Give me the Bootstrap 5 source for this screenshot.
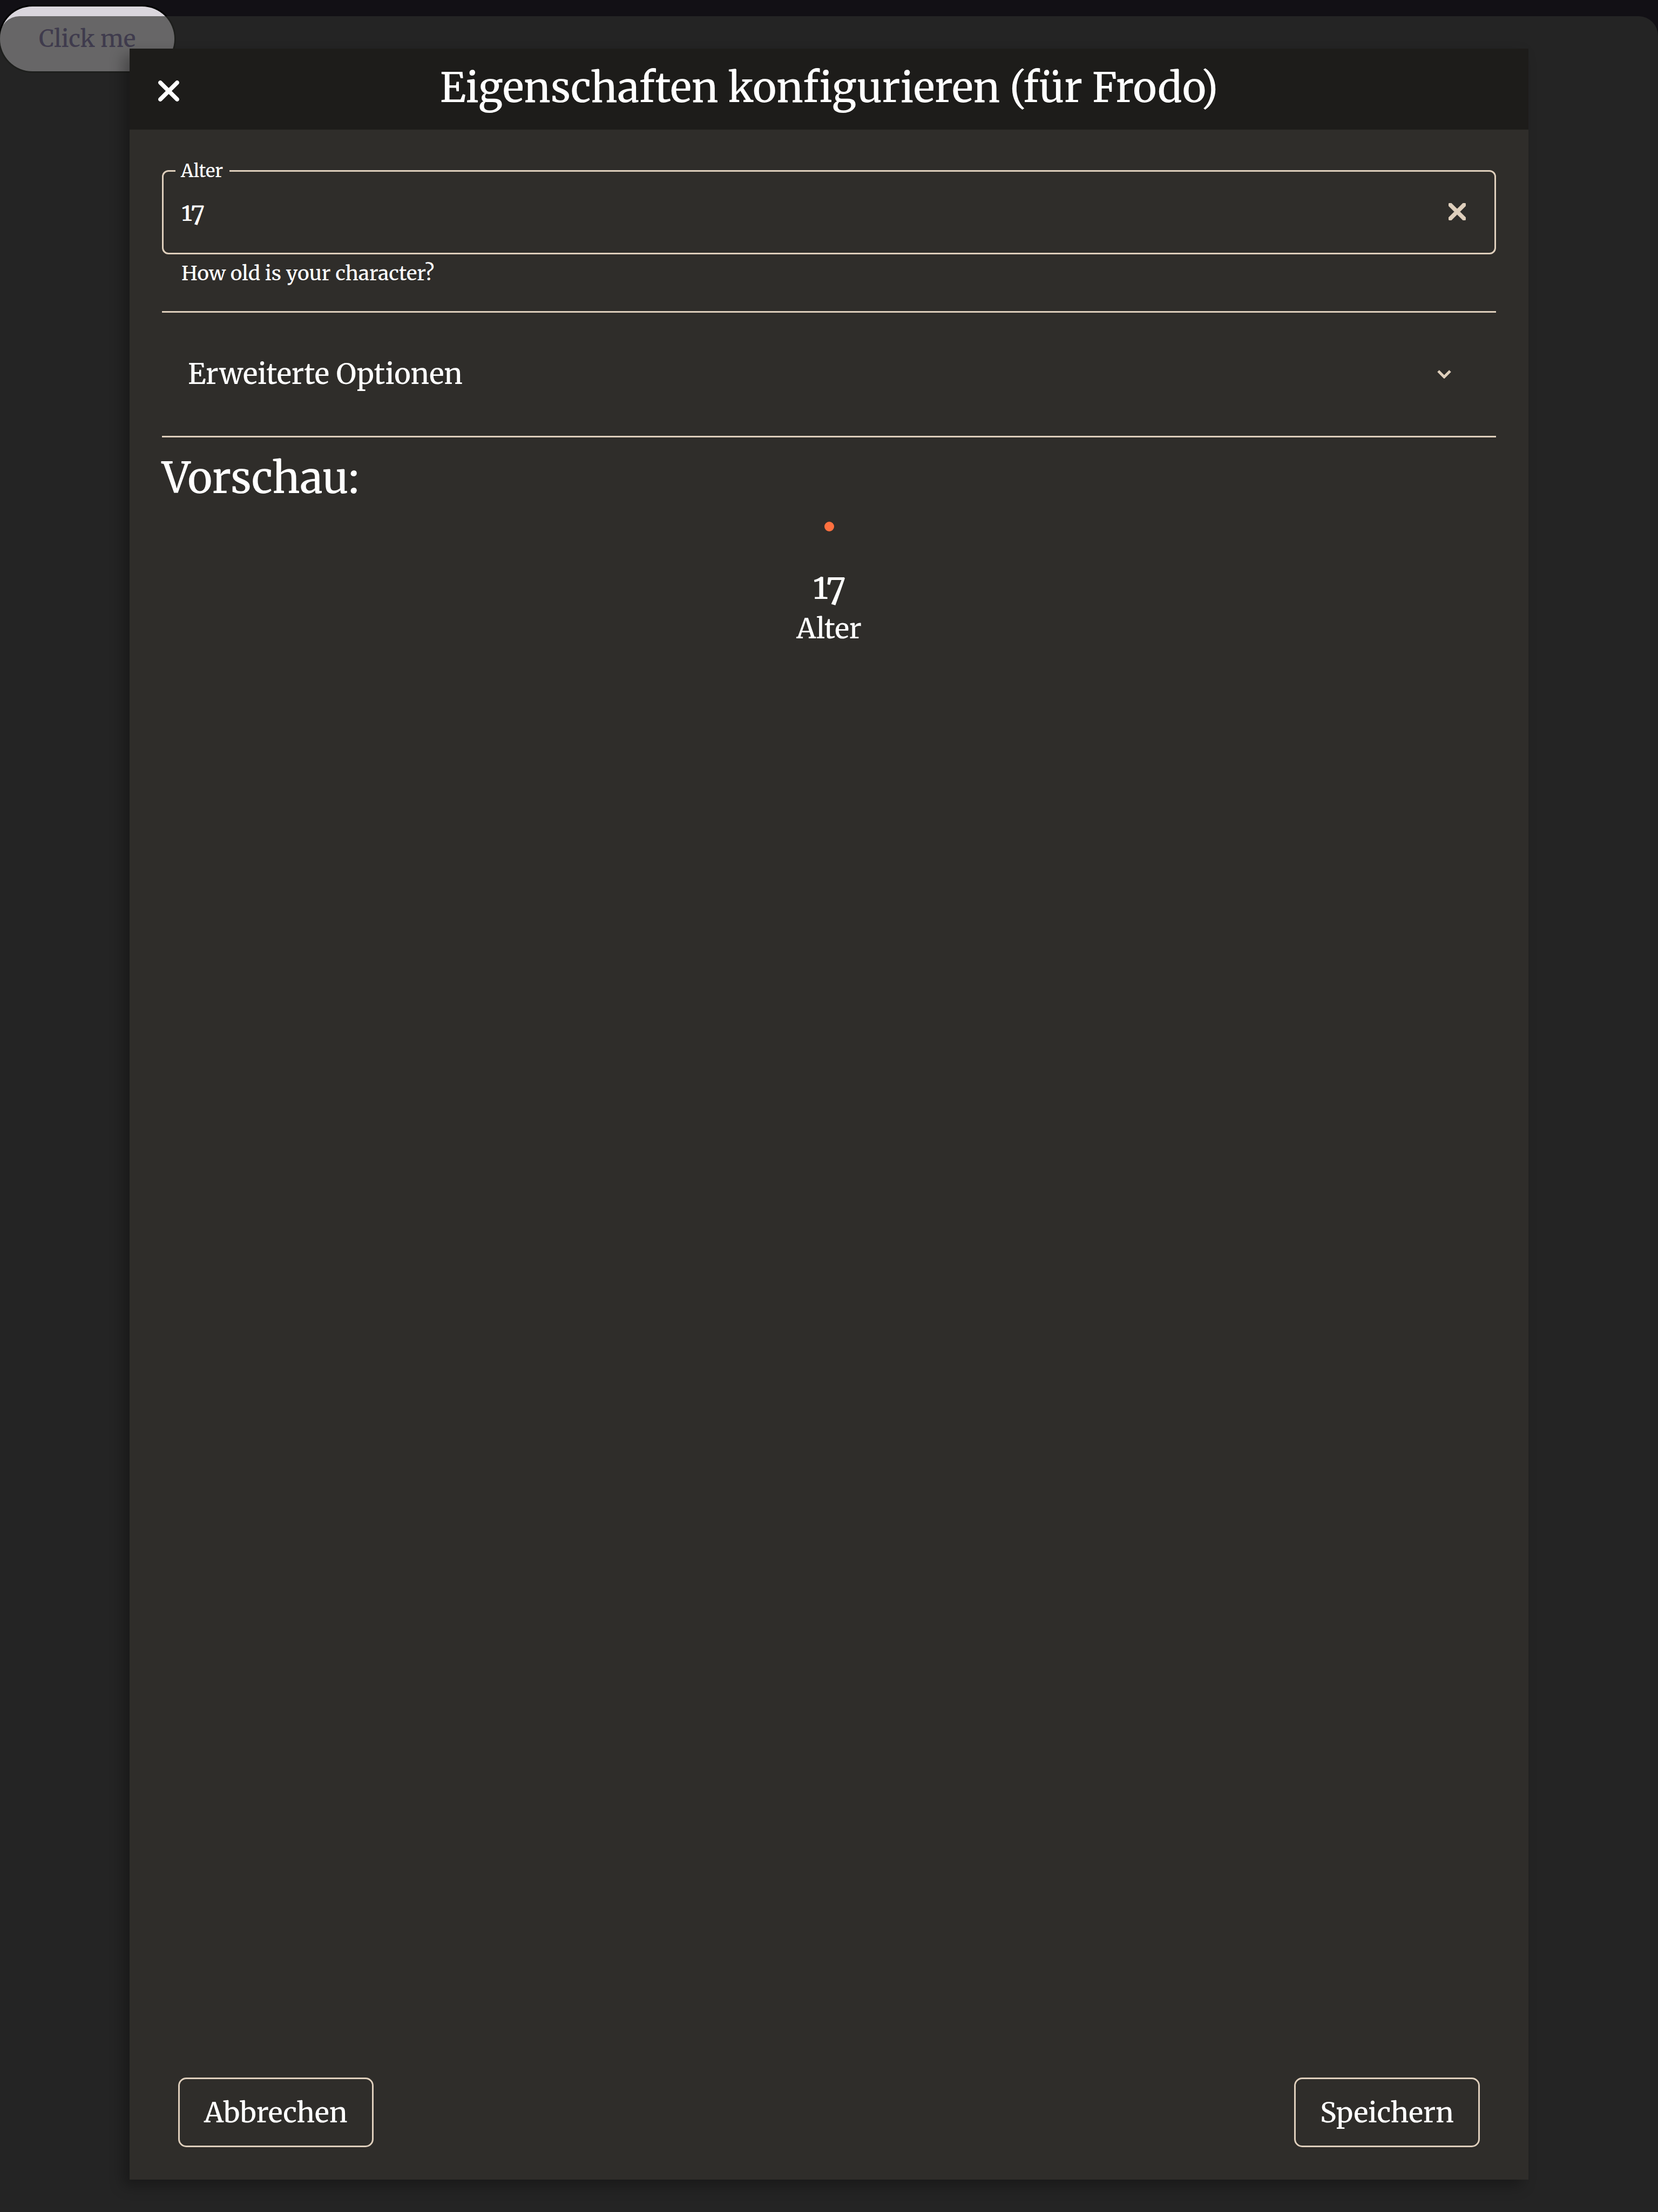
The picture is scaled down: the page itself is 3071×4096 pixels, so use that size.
<!DOCTYPE html>
<html lang="de">
<head>
<meta charset="utf-8">
<meta name="viewport" content="width=device-width, initial-scale=1">
<title>Eigenschaften konfigurieren</title>
<link rel="stylesheet" href="https://cdn.jsdelivr.net/npm/bootstrap@5.3.0/dist/css/bootstrap.min.css">
<style>
:root { --cream: #dfcfbc; --panel: #2f2d2a; --head: #1d1c1a; }
body { background: #121015; color: #fff; font-family: Merriweather, "Noto Serif", "DejaVu Serif", serif; font-size: 51px; line-height: 78px; font-weight: 500; font-variant-numeric: oldstyle-nums; }
.stage { padding-top: 30px; isolation: isolate; }
.launch { position: absolute; z-index: -1; top: 12px; left: 0; height: 120px; padding: 0 72px; border: 0; border-radius: 60px; background: #dad6dd; color: #65558f; font-size: 43px; font-weight: 500; line-height: 120px; box-shadow: 0 0 0 3px #000; }
.sheet { background: rgba(45, 46, 43, .665); border-radius: 36px 36px 0 0; padding: 60px 240px; }
.dialog-box { background: var(--panel); box-shadow: -12px 12px 24px rgba(0, 0, 0, .3); }
.dialog-head { background: var(--head); height: 150px; }
.dialog-head h1 { font-size: 75px; line-height: 144px; font-weight: 500; }
.plain { background: none; border: 0; color: inherit; padding: 0; font-weight: 500; }
.head-side { width: 144px; }
.head-side.plain { padding-top: 6px; }
.dialog-main { padding: 75px 60px 0; }
.field { height: 156px; border: 3px solid var(--cream); border-radius: 12px; }
.field label { top: -19px; left: 22px; padding: 0 12px 0 10px; background: var(--panel); font-size: 33px; line-height: 36px; }
.field input { background: none; border: 0; outline: 0; color: inherit; font-size: 45px; font-weight: 500; font-variant-numeric: inherit; padding: 0 33px; min-width: 0; }
.clear { width: 138px; color: var(--cream); padding-bottom: 3px; }
.hint { font-size: 37px; line-height: 48px; margin: 11px 0 46px; padding-left: 36px; }
.options { height: 234px; border: solid var(--cream); border-width: 3px 0; padding: 0 83px 0 48px; font-size: 52px; }
.options svg { color: var(--cream); }
.dialog-main h2 { font-size: 78px; line-height: 150px; font-weight: 500; }
.dot { width: 18px; height: 18px; border-radius: 50%; background: #fe703f; margin: 6px 0 63px; }
.stat-value { font-size: 64px; }
.dialog-foot { padding: 60px 90px; }
.action { height: 129px; padding: 0 45px; border: 3px solid var(--cream); border-radius: 15px; color: #fff; font-size: 51px; font-weight: 500; line-height: 78px; }
</style>
</head>
<body>
<div class="stage d-flex flex-column min-vh-100 position-relative">
  <button type="button" class="launch">Click me</button>
  <div class="sheet d-flex flex-column flex-grow-1">
    <section class="dialog-box d-flex flex-column flex-grow-1" role="dialog" aria-labelledby="dialogTitle">
      <header class="dialog-head d-flex">
        <button type="button" class="plain head-side d-flex align-items-center justify-content-center" aria-label="Schließen">
          <svg width="39" height="39" viewBox="32 96 320 320" fill="currentColor"><path d="M342.6 150.6c12.5-12.5 12.5-32.8 0-45.3s-32.8-12.5-45.3 0L192 210.7 86.6 105.4c-12.5-12.5-32.8-12.5-45.3 0s-12.5 32.8 0 45.3L146.7 256 41.4 361.4c-12.5 12.5-12.5 32.8 0 45.3s32.8 12.5 45.3 0L192 301.3 297.4 406.6c12.5 12.5 32.8 12.5 45.3 0s12.5-32.8 0-45.3L237.3 256 342.6 150.6z"/></svg>
        </button>
        <h1 class="flex-grow-1 text-center m-0" id="dialogTitle">Eigenschaften konfigurieren (für Frodo)</h1>
        <div class="head-side"></div>
      </header>
      <div class="dialog-main flex-grow-1">
        <div class="field d-flex position-relative">
          <label class="position-absolute" for="age">Alter</label>
          <input class="flex-grow-1" type="text" inputmode="numeric" id="age" value="17" aria-describedby="ageHint">
          <button type="button" class="plain clear d-flex align-items-center justify-content-center" aria-label="Leeren">
            <svg width="32" height="32" viewBox="32 96 320 320" fill="currentColor" stroke="currentColor" stroke-width="12"><path d="M342.6 150.6c12.5-12.5 12.5-32.8 0-45.3s-32.8-12.5-45.3 0L192 210.7 86.6 105.4c-12.5-12.5-32.8-12.5-45.3 0s-12.5 32.8 0 45.3L146.7 256 41.4 361.4c-12.5 12.5-12.5 32.8 0 45.3s32.8 12.5 45.3 0L192 301.3 297.4 406.6c12.5 12.5 32.8 12.5 45.3 0s12.5-32.8 0-45.3L237.3 256 342.6 150.6z"/></svg>
          </button>
        </div>
        <p class="hint" id="ageHint">How old is your character?</p>
        <button type="button" class="plain options w-100 d-flex align-items-center justify-content-between" aria-expanded="false">
          <span>Erweiterte Optionen</span>
          <svg width="26" height="16" viewBox="0 0 26 16" fill="none" stroke="currentColor" stroke-width="5"><path d="M2 2l11 11 11-11"/></svg>
        </button>
        <h2 class="m-0">Vorschau:</h2>
        <div class="d-flex flex-column align-items-center">
          <span class="dot"></span>
          <span class="stat-value">17</span>
          <span>Alter</span>
        </div>
      </div>
      <footer class="dialog-foot d-flex justify-content-between">
        <button type="button" class="btn action">Abbrechen</button>
        <button type="button" class="btn action">Speichern</button>
      </footer>
    </section>
  </div>
</div>
<script src="https://cdn.jsdelivr.net/npm/bootstrap@5.3.0/dist/js/bootstrap.bundle.min.js"></script>
</body>
</html>
